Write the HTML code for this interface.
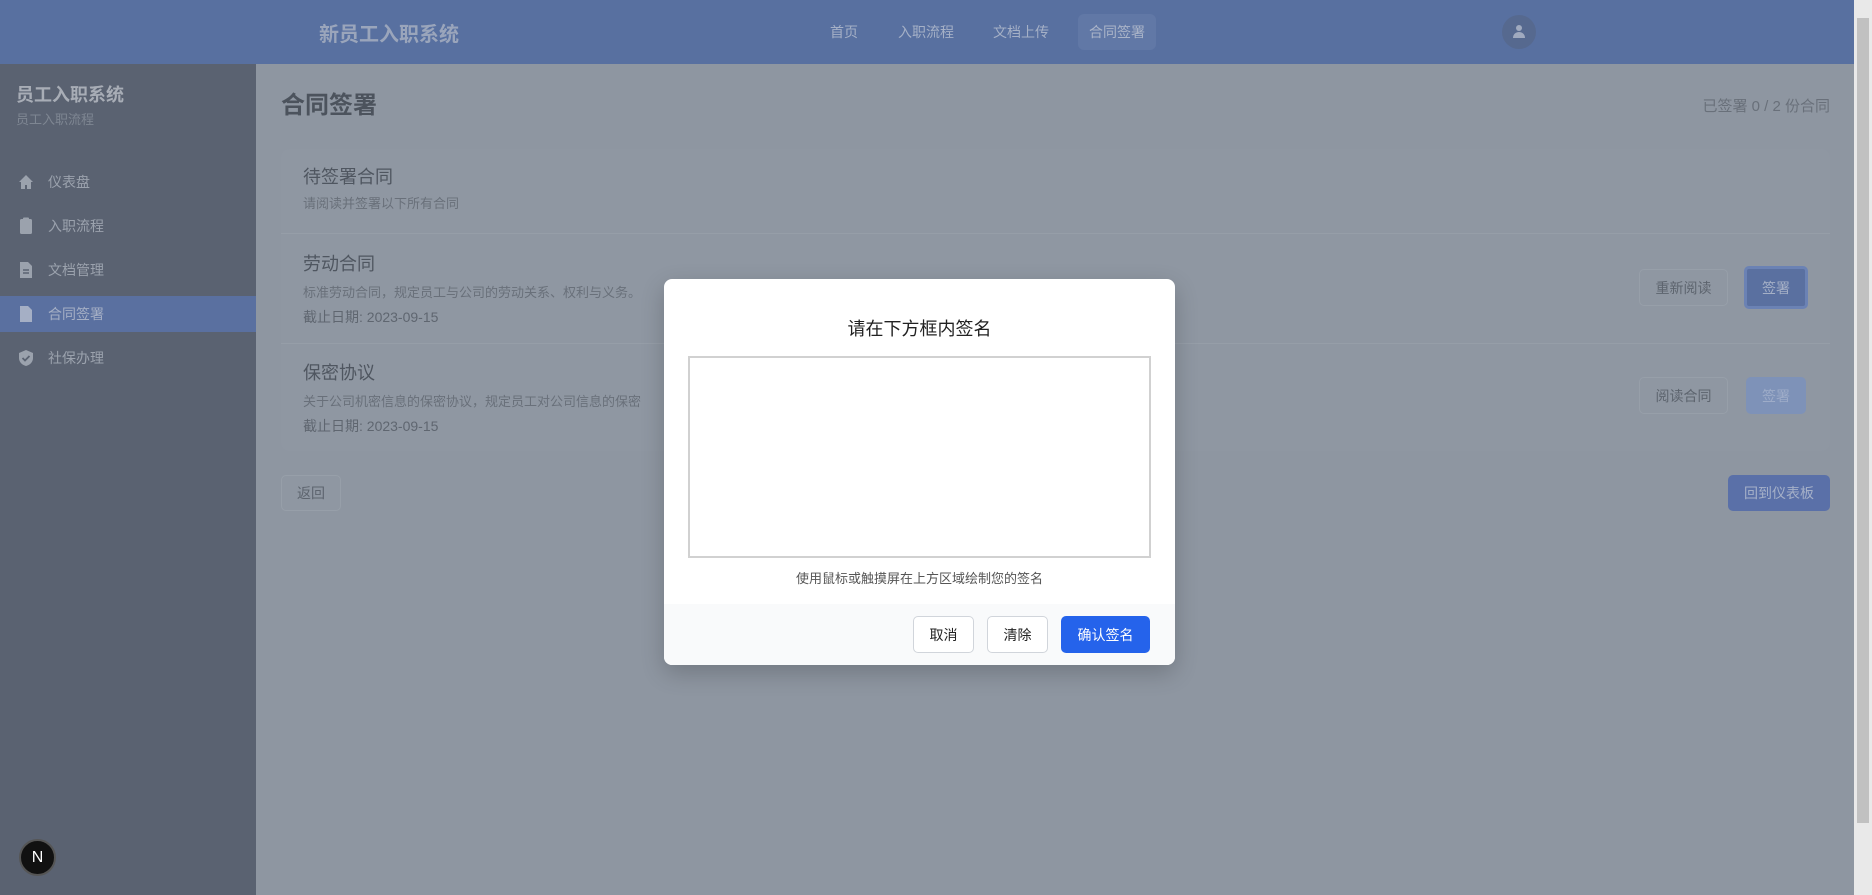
<!DOCTYPE html>
<html><head><meta charset="utf-8"><style>
*{box-sizing:border-box;margin:0;padding:0}
body{width:1872px;height:895px;overflow:hidden;font-family:"Liberation Sans","Noto Sans CJK SC",sans-serif;background:#8e96a1;position:relative}
.abs{position:absolute}
.hdr{left:0;top:0;width:1854px;height:64px;background:#5870a0}
.side{left:0;top:64px;width:256px;height:831px;background:#5a6271}
.t{position:absolute;white-space:nowrap}
.btn{position:absolute;border:1px solid #979fa9;border-radius:5px;background:#8f97a2;color:#5d646e;font-size:14px;display:flex;align-items:center;justify-content:center}
</style></head><body>
<div class="abs hdr"></div>
<div class="t" style="left:319px;top:18px;font-size:20px;font-weight:bold;color:#9aa5bb">新员工入职系统</div>
<div class="t" style="left:830px;top:22px;font-size:14px;color:#a5b0c6">首页</div>
<div class="t" style="left:898px;top:22px;font-size:14px;color:#a5b0c6">入职流程</div>
<div class="t" style="left:993px;top:22px;font-size:14px;color:#a5b0c6">文档上传</div>
<div class="abs" style="left:1078px;top:14px;width:78px;height:36px;background:#6178a6;border-radius:6px"></div>
<div class="t" style="left:1089px;top:22px;font-size:14px;color:#aab4c8">合同签署</div>
<div class="abs" style="left:1502px;top:15px;width:34px;height:34px;border-radius:50%;background:#56698f"></div>
<svg class="abs" style="left:1510px;top:23px" width="18" height="18" viewBox="0 0 18 18"><circle cx="9" cy="5" r="3" fill="#a0aabf"/><path d="M3 15c0-4 3-6 6-6s6 2 6 6z" fill="#a0aabf"/></svg>

<div class="abs side"></div>
<div class="t" style="left:16px;top:81px;font-size:18px;font-weight:bold;color:#a8adb6">员工入职系统</div>
<div class="t" style="left:16px;top:109px;font-size:13px;color:#7e8692">员工入职流程</div>
<div class="abs" style="left:0;top:296px;width:256px;height:36px;background:#5a70a0"></div>
<svg class="abs" style="left:17px;top:173px" width="18" height="18" viewBox="0 0 18 18"><path d="M9 2L2 9h2v7h4v-4h2v4h4V9h2z" fill="#9ba2ad"/></svg>
<svg class="abs" style="left:19px;top:217px" width="14" height="18" viewBox="0 0 14 18"><rect x="1" y="2" width="12" height="15" rx="1.5" fill="#9ba2ad"/><rect x="4" y="0.5" width="6" height="3" rx="1" fill="#9ba2ad"/></svg>
<svg class="abs" style="left:19px;top:261px" width="14" height="18" viewBox="0 0 14 18"><path d="M1 1h8l4 4v12H1z" fill="#9ba2ad"/><path d="M4 9h6M4 12h6" stroke="#5a6271" stroke-width="1.5"/></svg>
<svg class="abs" style="left:19px;top:305px" width="14" height="18" viewBox="0 0 14 18"><path d="M1 1h8l4 4v12H1z" fill="#a5afc5"/></svg>
<svg class="abs" style="left:17px;top:349px" width="18" height="18" viewBox="0 0 18 18"><path d="M9 1l7 3v5c0 4-3 7-7 8-4-1-7-4-7-8V4z" fill="#9ba2ad"/><path d="M5.5 9l2.5 2.5 4.5-4.5" stroke="#5a6271" stroke-width="1.8" fill="none"/></svg>
<div class="t" style="left:48px;top:172px;font-size:14px;color:#9ba2ad">仪表盘</div>
<div class="t" style="left:48px;top:216px;font-size:14px;color:#9ba2ad">入职流程</div>
<div class="t" style="left:48px;top:260px;font-size:14px;color:#9ba2ad">文档管理</div>
<div class="t" style="left:48px;top:304px;font-size:14px;color:#a5afc5">合同签署</div>
<div class="t" style="left:48px;top:348px;font-size:14px;color:#9ba2ad">社保办理</div>
<div class="abs" style="left:19px;top:839px;width:37px;height:37px;border-radius:50%;background:#111;border:2px solid #555;color:#fff;font-size:16px;display:flex;align-items:center;justify-content:center">N</div>

<div class="t" style="left:281px;top:85px;font-size:24px;font-weight:bold;color:#4c535d">合同签署</div>
<div class="t" style="right:42px;top:95px;font-size:15px;color:#69707a">已签署 0 / 2 份合同</div>
<div class="abs" style="left:281px;top:149px;width:1549px;height:302px;border-radius:8px;background:#8f97a2"></div>
<div class="t" style="left:303px;top:163px;font-size:18px;color:#4f5660">待签署合同</div>
<div class="t" style="left:303px;top:193px;font-size:13px;color:#69707a">请阅读并签署以下所有合同</div>
<div class="abs" style="left:281px;top:233px;width:1549px;height:1px;background:#969ea8"></div>
<div class="t" style="left:303px;top:250px;font-size:18px;color:#4f5660">劳动合同</div>
<div class="t" style="left:303px;top:282px;font-size:13px;color:#69707a">标准劳动合同，规定员工与公司的劳动关系、权利与义务。</div>
<div class="t" style="left:303px;top:307px;font-size:14px;color:#5f6670">截止日期: 2023-09-15</div>
<div class="abs" style="left:281px;top:343px;width:1549px;height:1px;background:#969ea8"></div>
<div class="t" style="left:303px;top:359px;font-size:18px;color:#4f5660">保密协议</div>
<div class="t" style="left:303px;top:391px;font-size:13px;color:#69707a">关于公司机密信息的保密协议，规定员工对公司信息的保密</div>
<div class="t" style="left:303px;top:416px;font-size:14px;color:#5f6670">截止日期: 2023-09-15</div>
<div class="btn" style="left:1639px;top:269px;width:89px;height:37px">重新阅读</div>
<div class="btn" style="left:1744px;top:266px;width:64px;height:43px;background:#5a70a0;border:3px solid #6b82b4;color:#a5b0c6">签署</div>
<div class="btn" style="left:1639px;top:377px;width:89px;height:37px">阅读合同</div>
<div class="btn" style="left:1746px;top:377px;width:60px;height:37px;background:#7e92b8;border:none;color:#9eacc8">签署</div>
<div class="btn" style="left:281px;top:475px;width:60px;height:36px">返回</div>
<div class="btn" style="left:1728px;top:475px;width:102px;height:36px;background:#5a70a8;border:none;color:#a5b0c8">回到仪表板</div>

<div class="abs" style="left:1854px;top:0;width:18px;height:895px;background:#e9e9e9"></div>
<div class="abs" style="left:1857px;top:18px;width:12px;height:805px;background:#c1c1c1"></div>

<div class="abs" style="left:664px;top:279px;width:511px;height:386px;background:#fff;border-radius:8px;overflow:hidden;box-shadow:0 8px 24px rgba(0,0,0,.2)">
 <div class="t" style="left:0;width:511px;text-align:center;top:36px;font-size:18px;color:#222">请在下方框内签名</div>
 <div class="abs" style="left:24px;top:77px;width:463px;height:202px;border:2px solid #d1d1d1"></div>
 <div class="t" style="left:0;width:511px;text-align:center;top:289px;font-size:13px;color:#555">使用鼠标或触摸屏在上方区域绘制您的签名</div>
 <div class="abs" style="left:0;top:325px;width:511px;height:61px;background:#f9fafb"></div>
 <div class="btn" style="left:249px;top:337px;width:61px;height:37px;background:#fff;border-color:#d1d5db;color:#222">取消</div>
 <div class="btn" style="left:323px;top:337px;width:61px;height:37px;background:#fff;border-color:#d1d5db;color:#222">清除</div>
 <div class="btn" style="left:397px;top:337px;width:89px;height:37px;background:#2563eb;border:none;color:#fff">确认签名</div>
</div>
</body></html>
